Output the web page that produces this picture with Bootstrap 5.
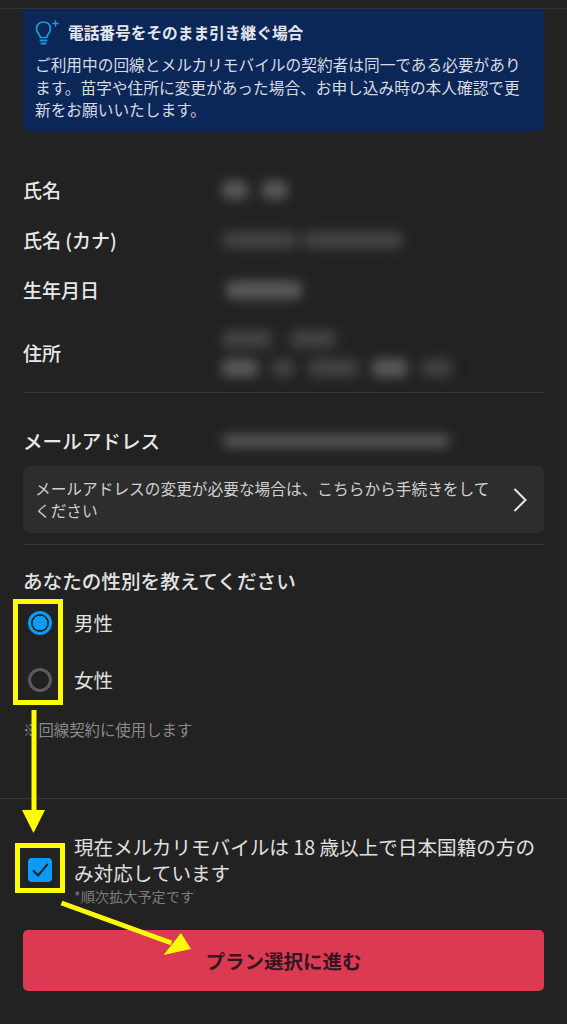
<!DOCTYPE html>
<html lang="ja">
<head>
<meta charset="utf-8">
<meta name="viewport" content="width=device-width, initial-scale=1">
<title>メルカリモバイル</title>
<link href="https://cdn.jsdelivr.net/npm/bootstrap@5.3.0/dist/css/bootstrap.min.css" rel="stylesheet">
<style>
body{background:#222;color:#e6e6e6;font-family:"Noto Sans CJK JP","Noto Sans",sans-serif;height:1024px;overflow:hidden;position:relative;font-size:15.7px}
.topline{height:9px;border-bottom:1px solid #333}
.sect{padding:0 23px}
.notice{background:#0a2757;height:122px;border-radius:0 0 6px 6px;padding:12px 14px 0 12px;color:#d8dbe2;line-height:22.500px}
.notice-t{font-weight:700;font-size:15.700px;color:#e4e6ec;height:24px;margin-bottom:9px}
.notice-t svg{margin:0 5px 0 0;flex:none}
.lbl{width:199px;flex:none;font-size:19px;font-weight:500;color:#e8e8e8}
.inforow{height:50px}
.blurs{filter:blur(6px)}
.blob{display:block;height:18px;background:#5a5a5a;border-radius:6px}
.dim{background:#434343}
.rule{border-top:1px solid #363636}
.linkbox{background:#2d2d2d;border-radius:6px;height:67px;padding:0 17px 0 12px;color:#d0d0d0;line-height:22px;border:0;width:100%}
.linkbox span{width:465px}
.q{font-size:19.600px;font-weight:500;color:#e2e2e2;line-height:26px}
.form-check-input.opt{appearance:none;width:24px;height:24px;margin:0;background:#222;border:3px solid #595959;border-radius:50%;flex:none}
.form-check-input.opt:checked{background:radial-gradient(circle,#0a9bf5 0 7px,#222 7.600px);border-color:#0a9bf5}
.form-check.optrow{height:57px;gap:22px;padding:0 0 0 5px;margin:0}
.optrow label{font-size:19.500px;color:#e0e0e0}
.note1{color:#8a8a8a;font-size:15.400px}
.form-check-input.agree{width:24px;height:24px;margin:0;flex:none;border:0;border-radius:4px;background-color:#0a9bf5;background-size:18px;background-image:url("data:image/svg+xml,%3csvg xmlns='http://www.w3.org/2000/svg' viewBox='0 0 20 20'%3e%3cpath fill='none' stroke='%231c2230' stroke-width='2.400' stroke-linecap='round' stroke-linejoin='round' d='M3 11l5 5L18 4'/%3e%3c/svg%3e")}
.agreelbl{font-size:19.600px;line-height:26px;color:#e0e0e0}
.note2{color:#7d7d7d;font-size:14.200px;line-height:21px}
.gobtn{background:#dc3a52;border:0;height:61px;border-radius:5px;font-size:19.500px;font-weight:700;color:#33161f;width:100%}
.gobtn:hover{background:#dc3a52;color:#33161f}
.marks{position:absolute;left:0;top:0;pointer-events:none}
</style>
</head>
<body>
<div class="topline"></div>
<main class="sect">
  <div class="notice">
    <div class="notice-t d-flex align-items-center">
      <svg width="28" height="26" viewBox="0 0 28 26" fill="none" stroke="#1a9ae0" stroke-width="1.700" stroke-linecap="round" aria-hidden="true"><path d="M8.500 2c-4 0-7 3-7 6.800 0 2.400 1.200 4 2.400 5.400.8 1 1.300 2 1.400 3.300h6.400c.1-1.300.6-2.300 1.400-3.300 1.200-1.400 2.400-3 2.400-5.400C15.500 5 12.500 2 8.500 2z"/><path d="M5.500 20.500h6M6.500 23.500h4" stroke-width="2"/><path d="M20.500 1v5M18 3.500h5" stroke-width="1.500"/></svg>
      <span>電話番号をそのまま引き継ぐ場合</span>
    </div>
    <div>ご利用中の回線とメルカリモバイルの契約者は同一である必要があります。苗字や住所に変更があった場合、お申し込み時の本人確認で更新をお願いいたします。</div>
  </div>

  <div style="margin-top:34px">
    <div class="inforow d-flex align-items-center"><div class="lbl">氏名</div><div class="blurs d-flex" style="gap:14px"><i class="blob" style="width:26px"></i><i class="blob" style="width:26px"></i></div></div>
    <div class="inforow d-flex align-items-center"><div class="lbl">氏名 (カナ)</div><div class="blurs d-flex" style="gap:6px"><i class="blob dim" style="width:75px"></i><i class="blob dim" style="width:100px"></i></div></div>
    <div class="inforow d-flex align-items-center"><div class="lbl">生年月日</div><div class="blurs d-flex"><i class="blob ms-1" style="width:76px"></i></div></div>
    <div class="d-flex align-items-center" style="height:77px"><div class="lbl">住所</div><div class="blurs d-flex flex-column" style="gap:11px"><div class="d-flex" style="gap:18px"><i class="blob dim" style="width:50px"></i><i class="blob dim" style="width:46px"></i></div><div class="d-flex" style="gap:14px"><i class="blob" style="width:36px"></i><i class="blob dim" style="width:22px"></i><i class="blob dim" style="width:50px"></i><i class="blob" style="width:36px"></i><i class="blob dim" style="width:30px"></i></div></div></div>
  </div>
  <div class="rule"></div>

  <div class="d-flex align-items-center" style="height:73px;padding-top:23px"><div class="lbl" style="font-size:19.600px">メールアドレス</div><div class="blurs d-flex"><i class="blob" style="width:228px;height:12px"></i></div></div>
  <button type="button" class="linkbox d-flex align-items-center justify-content-between text-start" >
    <span>メールアドレスの変更が必要な場合は、こちらから手続きをしてください</span>
    <svg width="14" height="26" viewBox="0 0 14 26" fill="none" stroke="#e8e8e8" stroke-width="2" aria-hidden="true"><path d="M1.500 2l11 11-11 11"/></svg>
  </button>
  <div class="rule" style="margin-top:11px"></div>

  <div class="q" style="margin-top:23px">あなたの性別を教えてください</div>
  <div>
    <div class="form-check optrow d-flex align-items-center"><input class="form-check-input opt" type="radio" name="gender" id="m" checked><label for="m">男性</label></div>
    <div class="form-check optrow d-flex align-items-center"><input class="form-check-input opt" type="radio" name="gender" id="f"><label for="f">女性</label></div>
  </div>
  <div class="note1" style="margin-top:10px">※回線契約に使用します</div>
</main>
<div class="rule" style="margin-top:57px"></div>
<footer class="sect">
  <div class="d-flex gap-4 align-items-start" style="margin-top:35px;padding-left:5px">
    <input class="form-check-input agree" style="margin-top:24px" type="checkbox" id="agree" checked>
    <div style="margin-left:-2px">
      <label class="agreelbl d-block" for="agree">現在メルカリモバイルは 18 歳以上で日本国籍の方のみ対応しています</label>
      <div class="note2">*順次拡大予定です</div>
    </div>
  </div>
  <button type="button" class="btn gobtn" style="margin-top:23px">プラン選択に進む</button>
</footer>
<svg class="marks" width="567" height="1024" viewBox="0 0 567 1024" aria-hidden="true">
  <g fill="none" stroke="#ffff00" stroke-width="5">
    <rect x="15.500" y="601.500" width="45" height="101"/>
    <rect x="17.500" y="845.500" width="45" height="45"/>
    <path d="M34 710v102"/>
    <path d="M61.500 903l110 40"/>
  </g>
  <g fill="#ffff00">
    <path d="M22 810h23l-11.500 23z"/>
    <path d="M181 933l10 16-27.500 6z"/>
  </g>
</svg>
<script src="https://cdn.jsdelivr.net/npm/bootstrap@5.3.0/dist/js/bootstrap.bundle.min.js"></script>
</body>
</html>
